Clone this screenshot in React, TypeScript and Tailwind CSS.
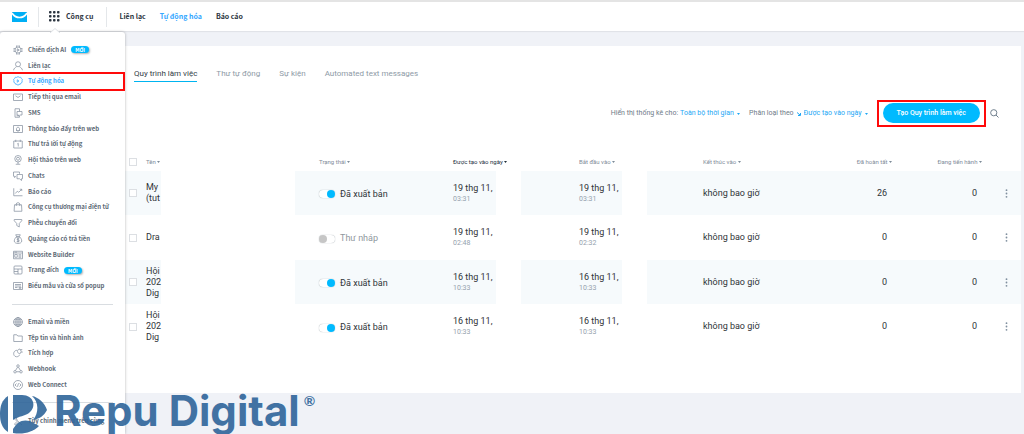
import { useState, type ReactNode } from 'react';

type MenuItem = {
  label: string;
  icon: ReactNode;
  isNew?: boolean;
};

const toolItems: MenuItem[] = [
  {
    label: 'Chiến dịch AI',
    isNew: true,
    icon: (
      <>
        <circle cx="10" cy="10" r="6" />
        <path d="M8.500 7.500v5l4-2.500zM7 1v3M10 .5v3M13 1v3M7 16v3M10 16.500v3M13 16v3M1 7h3M.5 10h3M1 13h3M16 7h3M16.500 10h3M16 13h3" />
      </>
    ),
  },
  {
    label: 'Liên lạc',
    icon: (
      <>
        <circle cx="10" cy="6.500" r="5" />
        <path d="M1 18.500c1-4 3.500-5.500 6-7M19 18.500c-1-4-3.500-5.500-6-7" />
      </>
    ),
  },
  {
    label: 'Tự động hóa',
    icon: (
      <>
        <path d="M10 1.200l2.500 1.500 2.900-.2 1.300 2.600 2.200 1.700-.9 2.800.4 2.900-2.500 1.500-1.300 2.600-2.900-.1L10 18.800l-1.700-2.300-2.900.1-1.300-2.600-2.500-1.500.4-2.900-.9-2.800 2.200-1.700 1.300-2.600 2.900.2z" />
        <path d="M8.500 7.500v5l3.500-2.500z" />
      </>
    ),
  },
  {
    label: 'Tiếp thị qua email',
    icon: <path d="M1 4h18v13H1zM5 7.500l5 3.500 5-3.500" />,
  },
  {
    label: 'SMS',
    icon: (
      <>
        <path d="M13 7V1.500H4v17h9v-2.500M7 15.500h3" />
        <path d="M8 7h10v7h-4.500L11 16.500V14H8z" />
      </>
    ),
  },
  {
    label: 'Thông báo đẩy trên web',
    icon: (
      <>
        <path d="M1 3h18v14H1z" />
        <path d="M6 13h8M7 13V9.500c0-4 6-4 6 0V13M9 15h2" />
      </>
    ),
  },
  {
    label: 'Thư trả lời tự động',
    icon: (
      <>
        <path d="M1.500 4h17v14h-17zM5.500 1.500V6M14.500 1.500V6" />
        <path d="M8.500 10l2-1.500v6.500" />
      </>
    ),
  },
  {
    label: 'Hội thảo trên web',
    icon: (
      <>
        <circle cx="10" cy="7.500" r="6.500" />
        <circle cx="10" cy="7.500" r="3" />
        <path d="M10 14v4M5.500 18.500h9" />
      </>
    ),
  },
  {
    label: 'Chats',
    icon: (
      <>
        <path d="M6 10.500L3 13v-2.500H1V2h12v3.500" />
        <path d="M8 7h11v8.500h-2V19l-4-3.500H8z" />
      </>
    ),
  },
  {
    label: 'Báo cáo',
    icon: <path d="M1.500 2.500v15H19M4.500 13l4-4.500 3 2 6-6M13.500 4.500h4v3.500" />,
  },
  {
    label: 'Công cụ thương mại điện tử',
    icon: <path d="M3 5.500h14l.8 13H2.200zM6.500 8V4c0-3.500 7-3.500 7 0v4" />,
  },
  {
    label: 'Phễu chuyển đổi',
    icon: <path d="M2.500 3h15v2.500L12.500 11v7l-5-3v-4L2.500 5.500z" />,
  },
  {
    label: 'Quảng cáo có trả tiền',
    icon: (
      <>
        <path d="M7 5L5.500 1.500h9L13 5zM7 5c-2 2.500-4.500 5.500-4.500 9 0 6.500 15 6.500 15 0 0-3.500-2.500-6.500-4.500-9" />
        <path d="M12.500 9.500h-4v2.500h3.500v3H7.500M10 8v9M6 6.500h8" />
      </>
    ),
  },
  {
    label: 'Website Builder',
    icon: <path d="M1 2.500h18v15H1zM1 6h18M3 4.300h5M3.500 9h5v5.500h-5zM11 9.500h5.500M11 12h5.500M11 14.500h5.500" />,
  },
  {
    label: 'Trang đích',
    isNew: true,
    icon: <path d="M4 2h12c1.500 0 2 .5 2 2v12c0 1.500-.5 2-2 2H4c-1.500 0-2-.5-2-2V4c0-1.500.5-2 2-2zM2 8h16M10 8v10M2 13h8" />,
  },
  {
    label: 'Biểu mẫu và cửa sổ popup',
    icon: <path d="M1 3h18v14H1zM4 7h12M4 10h12M4 13h5M12 12.500h4v2h-4z" />,
  },
];

const systemItems: MenuItem[] = [
  {
    label: 'Email và miền',
    icon: (
      <>
        <circle cx="10" cy="10" r="8.800" />
        <ellipse cx="10" cy="10" rx="4.200" ry="8.800" />
        <path d="M10 1v18M1 10h18M2.500 5.500h15M2.500 14.500h15" />
      </>
    ),
  },
  {
    label: 'Tệp tin và hình ảnh',
    icon: <path d="M1.500 3.500h6l2 2.500h9v11h-17z" />,
  },
  {
    label: 'Tích hợp',
    icon: (
      <path d="M8.500 4.500c-9 0-9.500 12.500-1.500 13 4 0 5.500-2 6-4M10 9.500c-2.500-3.500 0-7.500 4-7.500l2.500 4.500-2 4.500c-2 .5-3.500 0-4.500-1.500zM15 3.500l3.500-.5M16.500 8.500l3-.500" />
    ),
  },
  {
    label: 'Webhook',
    icon: (
      <>
        <circle cx="10" cy="4" r="2.500" />
        <circle cx="4" cy="15.500" r="2.500" />
        <circle cx="16" cy="15.500" r="2.500" />
        <path d="M9 6.500l-4 6.500M11 6.500l4 6.500M6.500 15.500h7" />
      </>
    ),
  },
  {
    label: 'Web Connect',
    icon: (
      <>
        <circle cx="10" cy="10" r="9" />
        <path d="M7 7l-3 3 3 3M13 7l3 3-3 3M11 6.500l-2 7" />
      </>
    ),
  },
];

const customizeItem: MenuItem = {
  label: 'Tùy chỉnh menu trên cùng',
  icon: <path d="M2 3.500L4 2l4 4-.5 2L16 16.500 18 18M7.500 8l-2 .5-4-4M9 10l-6 6 1.500 2 7-6" />,
};

const tabs = ['Quy trình làm việc', 'Thư tự động', 'Sự kiện', 'Automated text messages'];

const workflows = [
  { name: ['My', '(tut'], published: true, created: ['19 thg 11,', '03:31'], started: ['19 thg 11,', '03:31'], done: 26, active: 0 },
  { name: ['Dra'], published: false, created: ['19 thg 11,', '02:48'], started: ['19 thg 11,', '02:32'], done: 0, active: 0 },
  { name: ['Hội', '202', 'Dig'], published: true, created: ['16 thg 11,', '10:33'], started: ['16 thg 11,', '10:33'], done: 0, active: 0 },
  { name: ['Hội', '202', 'Dig'], published: true, created: ['16 thg 11,', '10:33'], started: ['16 thg 11,', '10:33'], done: 0, active: 0 },
];

function Caret({ className = '' }: { className?: string }) {
  return (
    <svg viewBox="0 0 6 4" className={`inline-block h-[2px] w-[3px] shrink-0 ${className}`} fill="currentColor">
      <path d="M0 0h6L3 4z" />
    </svg>
  );
}

function MenuRow({ item, active = false }: { item: MenuItem; active?: boolean }) {
  return (
    <li className="relative flex flex-1 items-center">
      <a href="#" className={`flex items-center pl-[13px] whitespace-nowrap ${active ? 'text-[#35a7ff]' : 'text-[#5b6874]'}`}>
        <svg
          viewBox="0 0 20 20"
          className={`mr-[5px] size-[10px] shrink-0 ${active ? 'text-[#35a7ff]' : 'text-[#8792a0]'}`}
          fill="none"
          stroke="currentColor"
          strokeWidth="1.500"
        >
          {item.icon}
        </svg>
        {item.label}
        {item.isNew && (
          <span className="ml-[5px] rounded-full bg-[#00baff] px-1 text-[5px] leading-[7px] text-white shadow-[1px_1px_2px_rgba(0,0,0,0.3)]">
            MỚI
          </span>
        )}
      </a>
      {active && <span className="pointer-events-none absolute inset-x-0 -inset-y-[2px] border-2 border-[#ff0a0a]" />}
    </li>
  );
}

function HeadCell({ label, span = 1, align = 'text-left', active = false }: { label: string; span?: number; align?: string; active?: boolean }) {
  return (
    <th colSpan={span} className={`p-0 font-normal whitespace-nowrap ${align} ${active ? 'text-[#22303c]' : 'text-[#7f8c99]'}`}>
      {label} <Caret className="align-middle" />
    </th>
  );
}

function DateCell({ value, className }: { value: string[]; className: string }) {
  return (
    <td className={`p-0 whitespace-nowrap ${className}`}>
      <div>{value[0]}</div>
      <div className="text-[7px] leading-[10px] text-[#94a1ad]">{value[1]}</div>
    </td>
  );
}

export default function App() {
  const [activeTab, setActiveTab] = useState(tabs[0]);
  const [rows, setRows] = useState(workflows);

  const togglePublished = (index: number) => {
    setRows(rows.map((row, i) => (i === index ? { ...row, published: !row.published } : row)));
  };

  return (
    <div className="relative flex min-h-screen flex-col overflow-hidden bg-[#f0f2f7] font-['Roboto',sans-serif]">
      {/* Top bar */}
      <header className="flex h-[31px] items-center border-t-2 border-[#e4e4e4] bg-white pl-3 font-['Noto_Sans_CJK_SC',sans-serif] text-[7px] font-bold text-[#2c3540] shadow-[0_1px_1px_rgba(0,0,0,0.06)]">
        <a href="#" aria-label="Trang chủ">
          <svg viewBox="0 0 30 20" className="h-[10px] w-[15px]">
            <path fill="#00aff5" d="M0 0h30v20H0z" />
            <path fill="none" stroke="#fff" strokeWidth="3" d="M0 2c7 12 23 12 30 0" />
          </svg>
        </a>
        <span className="ml-[11px] h-5 w-px bg-[#e4e7ea]" />
        <button className="ml-[10px] flex items-center gap-[6px]">
          <svg viewBox="0 0 22 22" className="size-[11px]" fill="currentColor">
            {[0, 8, 16].map((y) => [0, 8, 16].map((x) => <rect key={`${x}-${y}`} x={x} y={y} width="5" height="5" rx="1.500" />))}
          </svg>
          Công cụ
        </button>
        <span className="ml-[13px] h-5 w-px bg-[#e4e7ea]" />
        <nav className="ml-3 flex gap-[14px]">
          <a href="#">Liên lạc</a>
          <a href="#" className="text-[#35a7ff]">Tự động hóa</a>
          <a href="#">Báo cáo</a>
        </nav>
      </header>

      <div className="flex flex-1">
        {/* Tools menu */}
        <aside className="relative z-10 mt-px flex w-[125px] shrink-0 flex-col rounded-t-[3px] bg-white pt-[10px] font-['Noto_Sans_CJK_SC',sans-serif] text-[6px] leading-[10px] font-bold shadow-[0_0_3px_rgba(0,0,0,0.3)]">
          <svg viewBox="0 0 10 5" className="absolute -top-1 left-[50px] h-[5px] w-[10px]" fill="#fff" stroke="#dfe2e6">
            <path d="M0 5l5-4.500L10 5" />
          </svg>
          <ul className="flex h-[252px] flex-col">
            {toolItems.map((item) => (
              <MenuRow key={item.label} item={item} active={item.label === 'Tự động hóa'} />
            ))}
          </ul>
          <hr className="mx-3 mt-[10px] border-[#d9dde1]" />
          <ul className="mt-[9px] flex h-[79px] flex-col">
            {systemItems.map((item) => (
              <MenuRow key={item.label} item={item} />
            ))}
          </ul>
          <hr className="mx-3 mt-[9px] border-[#d9dde1]" />
          <ul className="mt-[10px] flex h-4 flex-col">
            <MenuRow item={customizeItem} />
          </ul>
        </aside>

        <main className="mt-[15px] mr-[3px] mb-[41px] min-w-0 flex-1 bg-white">
          <div className="ml-[9px] flex gap-[19px] pt-5 text-[8px] leading-[14px]">
            {tabs.map((tab) => (
              <button
                key={tab}
                onClick={() => setActiveTab(tab)}
                className={`border-b pt-px ${activeTab === tab ? 'border-[#00b4f0] text-[#333e48]' : 'border-transparent text-[#8e9aa6]'}`}
              >
                {tab}
              </button>
            ))}
          </div>

          <div className="mt-[18px] flex items-center justify-end pr-[22px] text-[7px] text-[#6f7c89]">
            <label htmlFor="period">Hiển thị thống kê cho:</label>
            <select id="period" className="ml-[2px] appearance-none text-[#1ea7f5]">
              <option>Toàn bộ thời gian</option>
            </select>
            <Caret className="ml-[3px] text-[#1ea7f5]" />
            <label htmlFor="sort" className="ml-[9px]">Phân loại theo</label>
            <svg viewBox="0 0 8 8" className="mx-[3px] size-1 text-[#1ea7f5]" fill="none" stroke="currentColor" strokeWidth="2">
              <path d="M0 1l6 5M7 2v5H2" />
            </svg>
            <select id="sort" className="appearance-none text-[#1ea7f5]">
              <option>Được tạo vào ngày</option>
            </select>
            <Caret className="ml-[3px] text-[#1ea7f5]" />
            <div className="ml-[9px] border-2 border-[#ff0a0a] px-1 pt-px pb-[2px]">
              <button className="h-5 rounded-full bg-[#00baff] px-[14px] text-[7px] font-medium text-white">Tạo Quy trình làm việc</button>
            </div>
            <button aria-label="Tìm kiếm" className="ml-1">
              <svg viewBox="0 0 18 18" className="size-[9px] text-[#71808e]" fill="none" stroke="currentColor" strokeWidth="2">
                <circle cx="7.500" cy="7.500" r="6.200" />
                <path d="M12 12l5 5" />
              </svg>
            </button>
          </div>

          {/* Workflow list */}
          <table className="mt-[25px] w-full table-fixed text-[9px] leading-[11px] text-[#2f3438]">
            <colgroup>
              <col className="w-[21px]" />
              <col className="w-[15px]" />
              <col className="w-[134px]" />
              <col className="w-[158px]" />
              <col className="w-[43px]" />
              <col className="w-[25px]" />
              <col className="w-[101px]" />
              <col className="w-[25px]" />
              <col />
              <col className="w-[90px]" />
              <col className="w-[90px]" />
              <col className="w-[39px]" />
            </colgroup>
            <thead className="text-[6px]">
              <tr className="h-[19px]">
                <th className="p-0 pl-1">
                  <input type="checkbox" aria-label="Chọn tất cả" className="block size-2 appearance-none border border-[#dcdfe3] bg-white checked:bg-[#00baff]" />
                </th>
                <HeadCell label="Tên" span={2} />
                <HeadCell label="Trạng thái" align="pl-6 text-left" />
                <HeadCell label="Được tạo vào ngày" span={2} active />
                <HeadCell label="Bắt đầu vào" span={2} align="pl-[58px] text-left" />
                <HeadCell label="Kết thúc vào" align="pl-[56px] text-left" />
                <HeadCell label="Đã hoàn tất" align="text-right" />
                <HeadCell label="Đang tiến hành" align="text-right" />
                <th />
              </tr>
            </thead>
            <tbody>
              {rows.map((row, index) => {
                const bg = index % 2 === 0 ? 'bg-[#f6fafc]' : 'bg-white';
                return (
                  <tr key={index} className="odd:h-[44px] even:h-[45px]">
                    <td className={`p-0 pl-1 ${bg}`}>
                      <input
                        type="checkbox"
                        aria-label={row.name[0]}
                        className="block size-2 appearance-none border border-[#dcdfe3] bg-white checked:bg-[#00baff]"
                      />
                    </td>
                    <td className={`p-0 whitespace-nowrap ${bg}`}>
                      {row.name.map((line) => (
                        <div key={line}>{line}</div>
                      ))}
                    </td>
                    <td />
                    <td className={`p-0 pt-[2px] pl-6 ${bg}`}>
                      <label className={`flex items-center gap-[5px] ${row.published ? '' : 'text-[#8f979e]'}`}>
                        <input
                          type="checkbox"
                          checked={row.published}
                          onChange={() => togglePublished(index)}
                          className="flex h-2 w-4 appearance-none rounded-full bg-white shadow-[0_0_1px_#8b959e] before:size-2 before:rounded-full before:bg-[#c6c6c6] checked:justify-end checked:before:bg-[#00baff]"
                        />
                        {row.published ? 'Đã xuất bản' : 'Thư nháp'}
                      </label>
                    </td>
                    <DateCell value={row.created} className={bg} />
                    <td />
                    <DateCell value={row.started} className={`pl-[58px] ${bg}`} />
                    <td />
                    <td className={`p-0 pl-[56px] ${bg}`}>không bao giờ</td>
                    <td className={`p-0 pr-[5px] text-right ${bg}`}>{row.done}</td>
                    <td className={`p-0 pr-[5px] text-right ${bg}`}>{row.active}</td>
                    <td className={`p-0 ${bg}`}>
                      <button aria-label="Thêm" className="ml-[23px] block">
                        <svg viewBox="0 0 3 9" className="h-[9px] w-[3px]" fill="#7f8f9e">
                          <circle cx="1.500" cy="1.200" r="0.900" />
                          <circle cx="1.500" cy="4.500" r="0.900" />
                          <circle cx="1.500" cy="7.800" r="0.900" />
                        </svg>
                      </button>
                    </td>
                  </tr>
                );
              })}
            </tbody>
          </table>
        </main>
      </div>

      {/* Brand mark over the page corner */}
      <div className="pointer-events-none absolute bottom-0 left-0 z-20 flex h-10 items-start font-bold text-[#2f659a] opacity-90">
        <svg viewBox="0 0 48 40" className="h-10 w-12 shrink-0" fill="currentColor">
          <path d="M8 2v36C2 34 0 28 0 20S2 6 8 2z" />
          <path d="M13 1h9c12 0 15 12 7 18-4 3-10 3-16 7z" />
          <path d="M32 2c6 1 13 7 15 14-3 6-8 9-14 10 6-7 6-18-1-24z" />
          <path d="M13 39v-4c4-7 9-10 17-8l9 5c-6 6-16 9-26 7z" />
        </svg>
        <span className="ml-[6px] font-['Inter',sans-serif] text-[42px] leading-[34px]">Repu Digital</span>
        <span className="ml-1 font-['Lato',sans-serif] text-[14px] leading-[14px]">®</span>
      </div>
    </div>
  );
}
